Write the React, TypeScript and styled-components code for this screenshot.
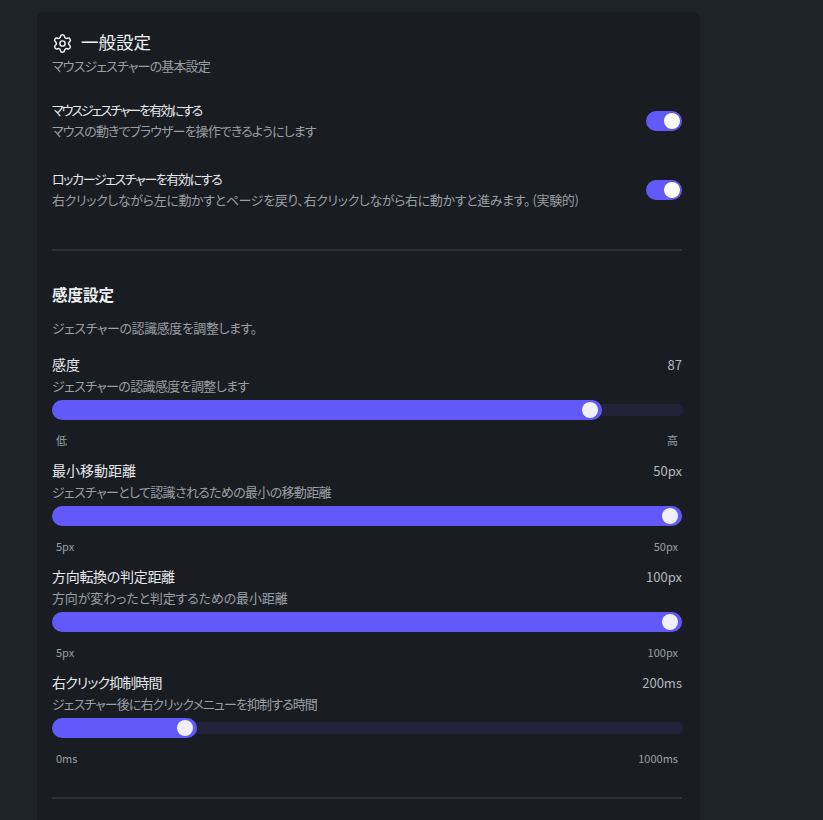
import React from 'react'
import styled, { createGlobalStyle } from 'styled-components'
import { Settings } from 'lucide-react'

const GlobalStyle = createGlobalStyle`
  html, body {
    margin: 0;
    height: 100%;
    overflow: hidden;
    background: #1d2329;
  }
  body {
    font-family: "Noto Sans CJK JP", "Noto Sans", sans-serif;
    font-feature-settings: "palt";
  }
`

const Page = styled.div`
  padding: 12px 0 0 37px;
  height: 820px;
  box-sizing: border-box;
  overflow: hidden;
`

const Card = styled.div`
  width: 663px;
  box-sizing: border-box;
  padding: 19px 18px 0 15px;
  background: #191d22;
  border-radius: 6px;
`

const Heading = styled.div`
  display: flex;
  align-items: center;
  gap: 8px;
  height: 22px;
  color: #eef0f3;
  font-size: 17.5px;

  svg {
    margin-top: 2px;
  }
`

const HeadingText = styled.span`
  margin-bottom: 2px;
`

const RowTitle = styled.div<{ $track?: number; $size?: number }>`
  height: 22px;
  line-height: ${(p) => (p.$size ? 20 : 22)}px;
  font-size: ${(p) => p.$size ?? 13}px;
  letter-spacing: ${(p) => p.$track ?? 0}px;
  color: #e6e8eb;
`

const RowNote = styled.div<{ $track?: number }>`
  height: 20px;
  line-height: 20px;
  font-size: 13px;
  letter-spacing: ${(p) => p.$track ?? 0}px;
  color: #9a9fa3;
  white-space: nowrap;
`

const HeadingNote = styled(RowNote)`
  margin-top: 3px;
`

const ToggleRow = styled.div<{ $top: number }>`
  display: flex;
  align-items: center;
  justify-content: space-between;
  height: 44px;
  margin-top: ${(p) => p.$top}px;
`

const Toggle = styled.div`
  width: 36px;
  height: 20px;
  margin-top: 2px;
  box-sizing: border-box;
  padding: 2px;
  display: flex;
  justify-content: flex-end;
  border-radius: 10px;
  background: #6159fa;
`

const ToggleKnob = styled.div`
  width: 16px;
  height: 16px;
  border-radius: 50%;
  background: #ffffff;
`

const Divider = styled.div<{ $top: number }>`
  height: 2px;
  background: #2f3337;
  margin-top: ${(p) => p.$top}px;
`

const SectionTitle = styled.div`
  margin-top: 31px;
  height: 24px;
  line-height: 24px;
  font-size: 15.5px;
  font-weight: 700;
  color: #eef0f3;
`

const SectionNote = styled(RowNote)`
  margin-top: 12px;
  margin-bottom: 16px;
`

const SliderBlock = styled.div`
  height: 106px;
`

const SliderHead = styled.div`
  display: flex;
  justify-content: space-between;
  height: 22px;
  line-height: 22px;
  font-size: 13px;
  color: #e6e8eb;
`

const SliderValue = styled.span`
  color: #b4b8be;
`

const Track = styled.div`
  position: relative;
  margin-top: 4px;
  width: 631px;
  height: 20px;
  display: flex;
  align-items: center;
`

const TrackRail = styled.div`
  width: 100%;
  height: 12px;
  border-radius: 6px;
  background: #232239;
`

const TrackFill = styled.div`
  position: absolute;
  left: 0;
  top: 0;
  height: 20px;
  border-radius: 10px;
  background: #6159fa;
`

const TrackThumb = styled.div`
  position: absolute;
  right: 4px;
  top: 2px;
  width: 16px;
  height: 16px;
  border-radius: 50%;
  background: #eef0fd;
`

const ScaleRow = styled.div`
  display: flex;
  justify-content: space-between;
  margin-top: 11px;
  padding: 0 4px;
  height: 18px;
  line-height: 18px;
  font-size: 11px;
  color: #9a9fa3;
`

type SliderProps = {
  title: string
  titleTrack: number
  note: string
  noteTrack: number
  value: string
  fill: number
  min: string
  max: string
}

const sliders: SliderProps[] = [
  { title: '感度', titleTrack: 0, note: 'ジェスチャーの認識感度を調整します', noteTrack: -0.65, value: '87', fill: 550, min: '低', max: '高' },
  { title: '最小移動距離', titleTrack: 0, note: 'ジェスチャーとして認識されるための最小の移動距離', noteTrack: -0.67, value: '50px', fill: 630, min: '5px', max: '50px' },
  { title: '方向転換の判定距離', titleTrack: -0.3, note: '方向が変わったと判定するための最小距離', noteTrack: -0.15, value: '100px', fill: 630, min: '5px', max: '100px' },
  { title: '右クリック抑制時間', titleTrack: -0.9, note: 'ジェスチャー後に右クリックメニューを抑制する時間', noteTrack: -0.92, value: '200ms', fill: 145, min: '0ms', max: '1000ms' },
]

const Slider = ({ title, titleTrack, note, noteTrack, value, fill, min, max }: SliderProps) => (
  <SliderBlock>
    <SliderHead>
      <RowTitle $size={14} $track={titleTrack}>{title}</RowTitle>
      <SliderValue>{value}</SliderValue>
    </SliderHead>
    <RowNote $track={noteTrack}>{note}</RowNote>
    <Track>
      <TrackRail />
      <TrackFill style={{ width: fill }}>
        <TrackThumb />
      </TrackFill>
    </Track>
    <ScaleRow>
      <span>{min}</span>
      <span>{max}</span>
    </ScaleRow>
  </SliderBlock>
)

export default function App() {
  return (
    <Page>
      <GlobalStyle />
      <Card>
        <Heading>
          <Settings size={21} strokeWidth={1.7} />
          <HeadingText>一般設定</HeadingText>
        </Heading>
        <HeadingNote $track={-0.85}>マウスジェスチャーの基本設定</HeadingNote>

        <ToggleRow $top={22}>
          <div>
            <RowTitle $track={-2}>マウスジェスチャーを有効にする</RowTitle>
            <RowNote $track={-0.92}>マウスの動きでブラウザーを操作できるようにします</RowNote>
          </div>
          <Toggle><ToggleKnob /></Toggle>
        </ToggleRow>

        <ToggleRow $top={25}>
          <div>
            <RowTitle $track={-1.4}>ロッカージェスチャーを有効にする</RowTitle>
            <RowNote $track={-0.37}>右クリックしながら左に動かすとページを戻り、右クリックしながら右に動かすと進みます。 (実験的)</RowNote>
          </div>
          <Toggle><ToggleKnob /></Toggle>
        </ToggleRow>

        <Divider $top={38} />
        <SectionTitle>感度設定</SectionTitle>
        <SectionNote $track={-0.45}>ジェスチャーの認識感度を調整します。</SectionNote>

        {sliders.map((s) => (
          <Slider key={s.title} {...s} />
        ))}

        <Divider $top={19} />
        <div style={{ height: 40 }} />
      </Card>
    </Page>
  )
}
